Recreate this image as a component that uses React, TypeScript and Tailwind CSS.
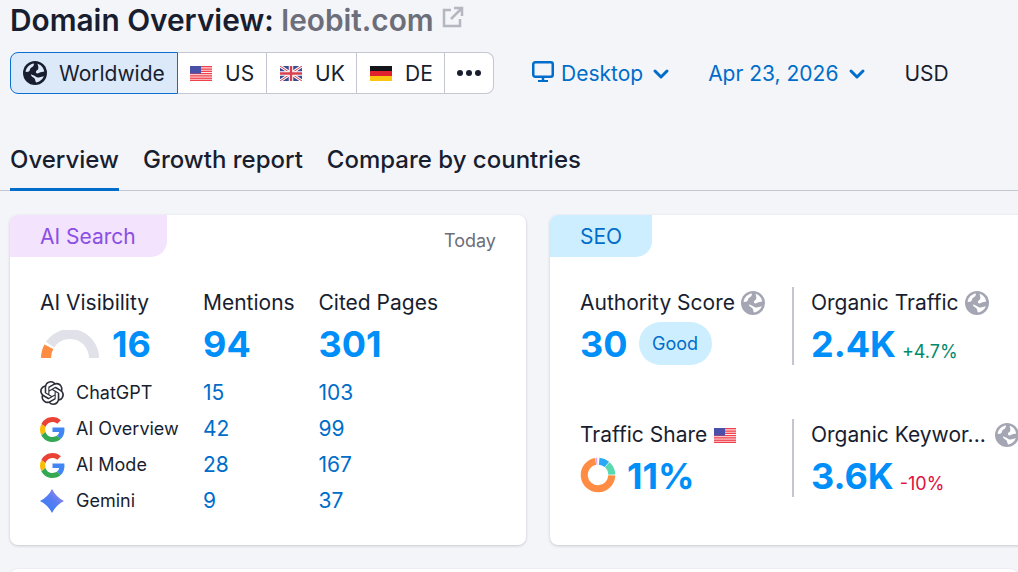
import { SiOpenai } from 'react-icons/si'
import { ChevronDown } from 'lucide-react'

function Globe({ color = '#a4a6b3', hole = '#ffffff' }: { color?: string; hole?: string }) {
  return (
    <svg width="24" height="24" viewBox="0 0 24 24" className="shrink-0">
      <circle cx="12" cy="12" r="12" fill={color} />
      <g transform="translate(12 12) scale(1.18) translate(-12 -12)" fill={hole}>
        <path d="M4 11C4.500 7.500 7.500 4.500 11 4c.5 1.200-.5 2.800-2 3.300-1.500.5-1 2.500-2 3.300-.8.6-2.200.6-3 .4z" />
        <path d="M14 4.200c3 .8 5.300 3.300 5.800 6.600l-3 .5c-1-.2-2 1.500-3.500 1-1-.5-.5-2.500 1-3 1-.5.5-3.500-.3-5.100z" />
        <path d="M8.500 13c1 .5 3 1 4 2 1 1 2.500 1 3.500.5 1-.2 2.500-.5 3.500-1-1 3-3.500 5-6.500 5.500-1-1-.5-3-2-4-1-.5-2.500-1.500-2.500-3z" />
      </g>
    </svg>
  )
}

function UsFlag() {
  return (
    <svg width="22" height="15" viewBox="0 0 22 15" className="shrink-0">
      <rect width="22" height="15" fill="#fff" />
      {[0, 2.400, 4.600, 6.900, 9.200, 11.500, 13.600].map(y => (
        <rect key={y} y={y} width="22" height="1.400" fill="#f0404a" />
      ))}
      <rect width="11" height="7.600" fill="#4a4fa8" />
    </svg>
  )
}

function UkFlag() {
  return (
    <svg width="22" height="15" viewBox="0 0 22 15" className="shrink-0">
      <rect width="22" height="15" fill="#3b4a8f" />
      <path d="M0 0L22 15M22 0L0 15" stroke="#fff" strokeWidth="3" />
      <path d="M0 0L22 15M22 0L0 15" stroke="#d8414f" strokeWidth="1" />
      <path d="M11 0V15M0 7.500H22" stroke="#fff" strokeWidth="4.500" />
      <path d="M11 0V15M0 7.500H22" stroke="#d8414f" strokeWidth="2.400" />
    </svg>
  )
}

function DeFlag() {
  return (
    <svg width="22" height="15" viewBox="0 0 22 15" className="shrink-0">
      <rect width="22" height="5" fill="#14151a" />
      <rect y="5" width="22" height="5" fill="#e0202c" />
      <rect y="10" width="22" height="5" fill="#fbc512" />
    </svg>
  )
}

function GoogleG() {
  return (
    <svg width="25" height="25" viewBox="0 0 48 48" className="shrink-0">
      <path fill="#EA4335" d="M24 9.500c3.500 0 6.700 1.200 9.200 3.600l6.900-6.900C35.900 2.400 30.500 0 24 0 14.600 0 6.500 5.400 2.600 13.200l8 6.200C12.400 13.700 17.700 9.500 24 9.500z" />
      <path fill="#4285F4" d="M47 24.500c0-1.600-.2-3.100-.4-4.500H24v9h12.900c-.6 3-2.200 5.500-4.700 7.200l7.700 6C44.400 38.100 47 31.900 47 24.500z" />
      <path fill="#FBBC05" d="M10.600 28.600c-.5-1.400-.8-3-.8-4.600s.3-3.200.8-4.600l-8-6.200C.9 16.500 0 20.100 0 24s.9 7.500 2.600 10.800l8-6.200z" />
      <path fill="#34A853" d="M24 48c6.500 0 11.900-2.100 15.900-5.800l-7.700-6c-2.200 1.400-4.900 2.300-8.200 2.300-6.300 0-11.600-4.200-13.400-9.900l-8 6.200C6.500 42.600 14.600 48 24 48z" />
    </svg>
  )
}

function GeminiStar() {
  return (
    <svg width="24" height="24" viewBox="0 0 24 24" className="shrink-0">
      <defs>
        <linearGradient id="gem" x1="0" y1="1" x2="1" y2="0">
          <stop offset="0" stopColor="#2f7bf5" />
          <stop offset="0.55" stopColor="#5a7df2" />
          <stop offset="1" stopColor="#b48ce8" />
        </linearGradient>
      </defs>
      <path d="M12 0Q16 8 24 12Q16 16 12 24Q8 16 0 12Q8 8 12 0z" fill="url(#gem)" />
    </svg>
  )
}

// degrees clockwise from the top
function arcPath(cx: number, cy: number, r: number, from: number, to: number) {
  const pt = (deg: number) => {
    const a = ((deg - 90) * Math.PI) / 180
    return `${(cx + r * Math.cos(a)).toFixed(2)} ${(cy + r * Math.sin(a)).toFixed(2)}`
  }
  return `M${pt(from)}A${r} ${r} 0 ${to - from > 180 ? 1 : 0} 1 ${pt(to)}`
}

function Gauge() {
  return (
    <svg width="58" height="28" viewBox="0 0 58 28" className="ml-px shrink-0">
      <path d={arcPath(29, 28, 24, -56, 90)} fill="none" stroke="#e0e1e9" strokeWidth="10" />
      <path d={arcPath(29, 28, 24, -90, -62)} fill="none" stroke="#ff8c43" strokeWidth="10" />
    </svg>
  )
}

const DONUT = [
  { from: 92, to: 350, color: '#ff8c43' },
  { from: 352, to: 357, color: '#d9a0f0' },
  { from: 5, to: 40, color: '#2aa7f5' },
  { from: 42, to: 88, color: '#59d9b0' },
]

function Donut() {
  return (
    <svg width="36" height="36" viewBox="0 0 36 36" className="-mt-px shrink-0">
      {DONUT.map(s => (
        <path
          key={s.color}
          d={s.from > s.to ? arcPath(18, 18, 13.800, s.from - 360, s.to - 360) : arcPath(18, 18, 13.800, s.from, s.to)}
          fill="none"
          stroke={s.color}
          strokeWidth="7"
        />
      ))}
    </svg>
  )
}

const AI_ROWS = [
  { name: 'ChatGPT', icon: <SiOpenai size={24} color="#2b2d38" className="mr-px shrink-0" />, mentions: 15, pages: 103 },
  { name: 'AI Overview', icon: <GoogleG />, mentions: 42, pages: 99 },
  { name: 'AI Mode', icon: <GoogleG />, mentions: 28, pages: 167 },
  { name: 'Gemini', icon: <GeminiStar />, mentions: 9, pages: 37 },
]

export default function App() {
  return (
    <div className="h-[572px] w-[1018px] overflow-hidden bg-[#f4f5f9] font-['Inter',sans-serif] text-[#181e2f]">
      <div className="flex h-10 items-center pl-2.5">
        <h1 className="text-[29.8px] leading-10 font-semibold whitespace-nowrap">
          Domain Overview: <span className="text-[#6c6e79]">leobit.com</span>
        </h1>
        <svg width="24" height="24" viewBox="0 0 24 24" fill="none" stroke="#b4b6c0" strokeWidth="2.500" className="-mt-1.5 ml-[7px]">
          <path d="M10 5H3v16h16v-7M13 3h8v8M21 3L10 14" />
        </svg>
      </div>

      <div className="mt-3 flex items-center pl-2.5">
        <div className="flex h-[42px] text-[21px] leading-none">
          <div className="flex w-[168px] items-center gap-3 rounded-l-lg border border-[#0b6fd0] bg-[#dbe9f9] pl-3">
            <Globe color="#181e2f" hole="#dbe9f9" />
            Worldwide
          </div>
          <div className="flex w-[89px] items-center gap-[13px] border-y border-r border-[#c4c7d2] bg-white pl-3">
            <UsFlag />
            US
          </div>
          <div className="flex w-[90px] items-center gap-[13px] border-y border-r border-[#c4c7d2] bg-white pl-[13px]">
            <UkFlag />
            UK
          </div>
          <div className="flex w-[88px] items-center gap-[13px] border-y border-r border-[#c4c7d2] bg-white pl-[13px]">
            <DeFlag />
            DE
          </div>
          <div className="flex w-[49px] items-center justify-center gap-[3px] rounded-r-lg border-y border-r border-[#c4c7d2] bg-white">
            <span className="size-1.5 rounded-full bg-[#181e2f]" />
            <span className="size-1.5 rounded-full bg-[#181e2f]" />
            <span className="size-1.5 rounded-full bg-[#181e2f]" />
          </div>
        </div>
        <div className="mt-0.5 ml-[37px] flex items-center text-[21px] text-[#006dca]">
          <svg width="24" height="24" viewBox="0 0 24 24" className="mr-1.5 -mt-1" fill="none" stroke="#006dca">
            <rect x="2.250" y="2.250" width="19.500" height="14.500" rx="2" strokeWidth="2.500" />
            <path d="M12 17v3.500" strokeWidth="2.500" />
            <path d="M7 21h10" strokeWidth="2" />
          </svg>
          Desktop
          <ChevronDown size={24} strokeWidth={3} className="ml-1.5" />
        </div>
        <div className="mt-0.5 ml-[35px] flex items-center text-[21px] text-[#006dca]">
          Apr 23, 2026
          <ChevronDown size={24} strokeWidth={3} className="ml-[7px]" />
        </div>
        <span className="mt-0.5 ml-[35px] text-[21px]">USD</span>
      </div>

      <div className="mt-[42px] flex h-[55px] gap-6 border-b border-[#c4c7d2] pl-2.5 text-2xl font-medium">
        <div className="-mb-px border-b-[3px] border-[#006dca] pt-2">Overview</div>
        <div className="pt-2">Growth report</div>
        <div className="pt-2">Compare by countries</div>
      </div>

      <div className="mt-6 flex gap-6 pl-2.5">
        <section className="h-[330px] w-[516px] shrink-0 rounded-lg bg-white shadow-[0_1px_3px_rgba(24,30,47,0.2)]">
          <div className="flex items-start justify-between">
            <div className="flex h-[42px] w-[157px] items-center rounded-tl-lg rounded-br-2xl bg-[#f3e3fd] pt-0.5 pl-[30px] text-[21px] text-[#8a4fe3]">AI Search</div>
            <span className="mt-3 mr-[30px] text-lg text-[#6c6e79]">Today</span>
          </div>
          <div className="mt-[34px] grid grid-cols-[163px_115.500px_1fr] pl-[30px]">
            <div className="text-[21px] leading-6">AI Visibility</div>
            <div className="text-[21px] leading-6">Mentions</div>
            <div className="text-[21px] leading-6">Cited Pages</div>
            <div className="mt-1.5 flex h-[46px] items-center gap-[13px]">
              <Gauge />
              <span className="text-4xl leading-none font-bold text-[#008ff8]">16</span>
            </div>
            <div className="mt-1.5 flex h-[46px] items-center text-4xl leading-none font-bold text-[#008ff8]">94</div>
            <div className="mt-1.5 flex h-[46px] items-center text-4xl leading-none font-bold text-[#008ff8]">301</div>
          </div>
          <div className="mt-2 pl-[30px]">
            {AI_ROWS.map(row => (
              <div key={row.name} className="grid h-9 grid-cols-[163px_115.500px_1fr] items-center text-[21px]">
                <div className="flex items-center gap-[11px] text-lg">
                  {row.icon}
                  {row.name === 'Gemini' ? <span className="ml-px">{row.name}</span> : row.name}
                </div>
                <span className="text-[#006dca]">{row.mentions}</span>
                <span className="text-[#006dca]">{row.pages}</span>
              </div>
            ))}
          </div>
        </section>

        <section className="h-[330px] w-[600px] shrink-0 rounded-lg bg-white shadow-[0_1px_3px_rgba(24,30,47,0.2)]">
          <div className="flex h-[42px] w-[102px] items-center rounded-tl-lg rounded-br-2xl bg-[#cdeeff] pt-0.5 pl-[30px] text-[21px] text-[#006dca]">SEO</div>
          <div className="mt-[30px] flex pl-[30px]">
            <div className="h-[78px] w-[212px] pt-1">
              <div className="flex items-center gap-1.5 text-[21px] leading-6 whitespace-nowrap">Authority Score <Globe /></div>
              <div className="mt-[7px] flex h-[43px] items-center gap-[11px]">
                <span className="text-4xl leading-none font-bold text-[#008ff8]">30</span>
                <span className="flex h-[43px] w-[73px] items-center justify-center rounded-[22px] bg-[#cdeeff] text-lg text-[#006dca]">Good</span>
              </div>
            </div>
            <div className="h-[78px] border-l-2 border-[#c4c7d2] pt-1 pl-[17px]">
              <div className="flex items-center gap-1.5 text-[21px] leading-6 whitespace-nowrap">Organic Traffic <Globe /></div>
              <div className="mt-[7px] flex h-[43px] items-center gap-1.5">
                <span className="text-4xl leading-none font-bold text-[#008ff8]">2.4K</span>
                <span className="mt-4 text-lg text-[#008a6a]">+4.7%</span>
              </div>
            </div>
          </div>
          <div className="mt-[54px] flex pl-[30px]">
            <div className="h-[78px] w-[212px] pt-1">
              <div className="flex items-center gap-[7px] text-[21px] leading-6 whitespace-nowrap">Traffic Share <UsFlag /></div>
              <div className="mt-[7px] flex h-[43px] items-center gap-[11px]">
                <Donut />
                <span className="text-4xl leading-none font-bold text-[#008ff8]">11%</span>
              </div>
            </div>
            <div className="h-[78px] border-l-2 border-[#c4c7d2] pt-1 pl-[17px]">
              <div className="flex items-center gap-[9px] text-[21px] leading-6 whitespace-nowrap">Organic Keywor... <Globe /></div>
              <div className="mt-[7px] flex h-[43px] items-center gap-1.5">
                <span className="text-4xl leading-none font-bold text-[#008ff8]">3.6K</span>
                <span className="mt-4 text-lg text-[#e0103e]">-10%</span>
              </div>
            </div>
          </div>
        </section>
      </div>

      <div className="mt-6 ml-2.5 h-10 rounded-lg bg-white shadow-[0_1px_3px_rgba(24,30,47,0.2)]" />
    </div>
  )
}
